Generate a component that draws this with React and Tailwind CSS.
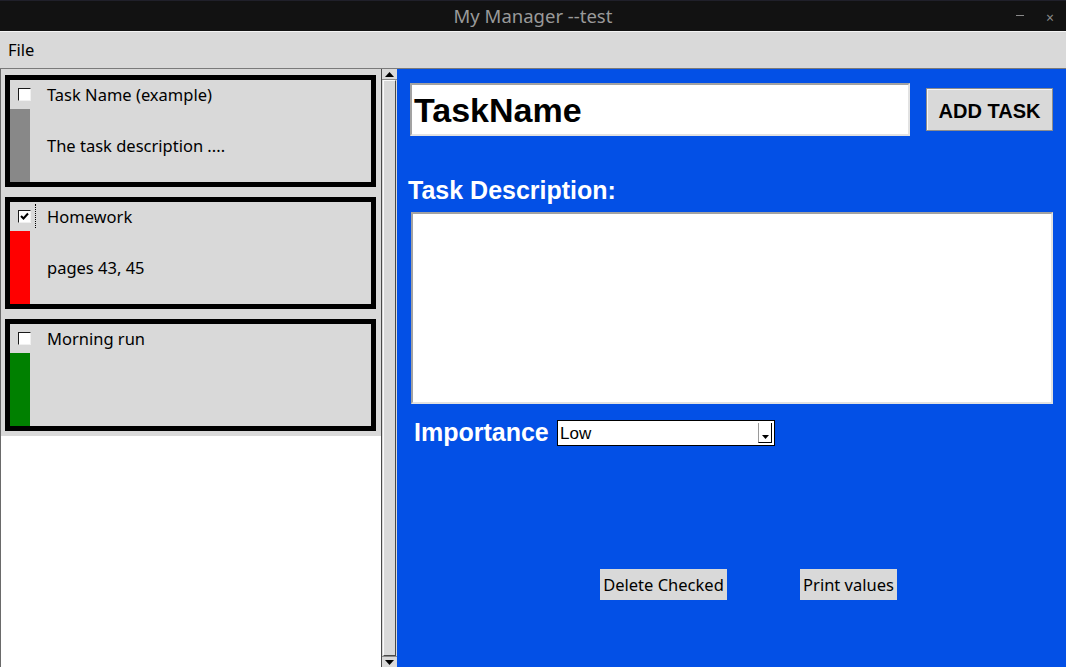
import React from 'react';

const tasks = [
  { name: 'Task Name (example)', desc: 'The task description ....', color: 'bg-[#888888]', checked: false },
  { name: 'Homework', desc: 'pages 43, 45', color: 'bg-[#ff0000]', checked: true },
  { name: 'Morning run', desc: '', color: 'bg-[#008000]', checked: false },
];

function CheckBox({ checked }) {
  return (
    <div className="w-[13px] h-[13px] bg-white border border-t-[#1a1a1a] border-l-[#1a1a1a] border-r-[#f0f0f0] border-b-[#f0f0f0] flex items-center justify-center shrink-0">
      {checked && (
        <svg width="9" height="9" viewBox="0 0 9 9">
          <path d="M1 4 L3.5 6.5 L8 1.5" stroke="#000" strokeWidth="2" fill="none" />
        </svg>
      )}
    </div>
  );
}

function TaskCard({ task }) {
  return (
    <div className="h-[112px] border-[5px] border-black bg-[#d9d9d9] flex">
      <div className="w-[20px] flex flex-col shrink-0">
        <div className="h-[29px] flex items-center pl-[8px]">
          <CheckBox checked={task.checked} />
        </div>
        <div className={`flex-1 ${task.color}`} />
      </div>
      <div className="flex-1 flex flex-col pl-[17px] text-[16.5px] text-black relative">
        {task.checked && (
          <div className="absolute left-[5px] top-[2px] h-[24px] border-l border-dotted border-black" />
        )}
        <div className="h-[29px] flex items-center pt-[2px]">{task.name}</div>
        <div className="flex-1 flex items-center pt-[2px]">{task.desc}</div>
      </div>
    </div>
  );
}

export default function App() {
  return (
    <div className="w-[1066px] h-[667px] flex flex-col overflow-hidden" style={{ fontFamily: '"Noto Sans", sans-serif' }}>
      {/* title bar */}
      <div className="h-[31px] bg-[#121212] border-t border-[#20202a] flex items-center relative shrink-0">
        <div className="flex-1 text-center text-[18.5px] text-[#9a9a9a]">My Manager --test</div>
        <div className="absolute right-[42px] top-[14px] w-[8px] h-[1px] bg-[#8a8a8a]" />
        <div className="absolute right-[12px] top-[6px] text-[#8a8a8a] text-[14px]">×</div>
      </div>

      {/* menu bar */}
      <div className="h-[38px] bg-[#d9d9d9] border-t border-[#f4f4f4] border-b border-b-[#7a7a7a] flex items-center pl-[8px] text-[16.5px] text-black shrink-0">
        File
      </div>

      <div className="flex-1 flex min-h-0">
        {/* task list */}
        <div className="w-[381px] bg-white border-l border-[#6a6a6a] flex flex-col">
          <div className="bg-[#d9d9d9] pt-[6px] pb-[5px] pl-[4px] pr-[5px] flex flex-col gap-[10px]">
            {tasks.map((t, i) => (
              <TaskCard key={i} task={t} />
            ))}
          </div>
        </div>

        {/* scrollbar */}
        <div className="w-[16px] bg-[#d9d9d9] border-l border-[#4a4a4a] flex flex-col">
          <div className="h-[11px] flex items-center justify-center border-b border-[#8a8a8a]">
            <svg width="9" height="5" viewBox="0 0 9 5"><path d="M0 5 L4.5 0 L9 5 Z" fill="#000" /></svg>
          </div>
          <div className="flex-1 border border-[#4a4a4a] border-t-[#fafafa] border-l-[#fafafa] mx-[1px]" />
          <div className="h-[11px] flex items-center justify-center border-t border-[#8a8a8a]">
            <svg width="9" height="5" viewBox="0 0 9 5"><path d="M0 0 L4.5 5 L9 0 Z" fill="#000" /></svg>
          </div>
        </div>

        {/* form */}
        <div className="flex-1 bg-[#0350e6] flex flex-col" style={{ fontFamily: '"Liberation Sans", Arial, sans-serif' }}>
          <div className="flex items-center mt-[14px] ml-[13px]">
            <div className="w-[500px] h-[53px] bg-white border-2 border-t-[#a2a2a2] border-l-[#a2a2a2] border-r-[#e2e2e2] border-b-[#e2e2e2] flex items-center pl-[2px] pt-[1px] text-[34px] font-bold text-black">
              TaskName
            </div>
            <div className="ml-[16px] w-[127px] h-[43px] bg-[#d9d9d9] border border-[#8c8c8c] shadow-[inset_1px_1px_0_#f6f6f6] flex items-center justify-center pt-[2px] text-[20px] font-bold text-black">
              ADD TASK
            </div>
          </div>

          <div className="mt-[40px] ml-[11px] h-[30px] flex items-center text-[25px] font-bold text-white">Task Description:</div>

          <div className="mt-[6px] ml-[14px] w-[642px] h-[192px] bg-white border-2 border-t-[#a2a2a2] border-l-[#a2a2a2] border-r-[#e2e2e2] border-b-[#e2e2e2]" />

          <div className="mt-[16px] ml-[17px] flex items-center h-[26px]">
            <div className="text-[25px] font-bold text-white w-[143px]">Importance</div>
            <div className="w-[218px] h-[26px] bg-white border border-black flex items-center">
              <div className="flex-1 pl-[2px] pt-[1px] text-[17px] text-black">Low</div>
              <div className="w-[14px] h-[20px] mr-[2px] border-l border-[#9a9a9a] border-b border-b-black border-r border-r-black flex items-end justify-center pb-[3px]">
                <svg width="7" height="4" viewBox="0 0 7 4"><path d="M0 0 L3.5 4 L7 0 Z" fill="#000" /></svg>
              </div>
            </div>
          </div>

          <div className="mt-[123px] ml-[203px] flex gap-[73px]" style={{ fontFamily: '"Noto Sans", sans-serif' }}>
            <div className="w-[127px] h-[31px] bg-[#d9d9d9] flex items-center justify-center pt-[2px] text-[16.5px] text-black">Delete Checked</div>
            <div className="w-[97px] h-[31px] bg-[#d9d9d9] flex items-center justify-center pt-[2px] text-[16.5px] text-black">Print values</div>
          </div>
        </div>
      </div>
    </div>
  );
}
